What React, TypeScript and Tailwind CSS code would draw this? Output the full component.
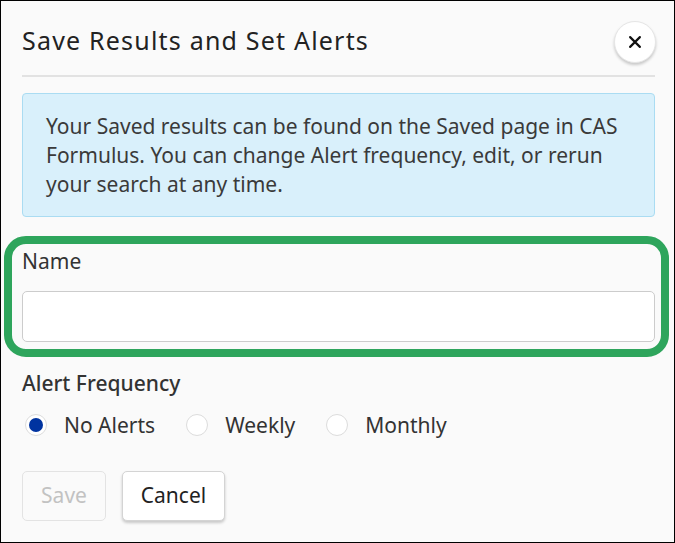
import { useState } from "react";

const options = ["No Alerts", "Weekly", "Monthly"];

export default function App() {
  const [frequency, setFrequency] = useState("No Alerts");
  const [name, setName] = useState("");

  return (
    <div
      className="h-[543px] w-[675px] border border-black bg-[#fafafa] text-[#333]"
      style={{ fontFamily: '"Noto Sans", "Open Sans", sans-serif' }}
    >
      <div className="pl-[21px] pr-[19px]">
        <div className="mt-[20px] flex h-[42px] items-center justify-between">
          <h2 className="mb-[4px] text-[25px] leading-[32px] font-normal tracking-[1.2px] text-[#222]">Save Results and Set Alerts</h2>
          <button
            type="button"
            aria-label="Close"
            className="-mr-[1px] flex h-[42px] w-[42px] items-center justify-center rounded-full border border-[#e6e6e6] bg-white shadow-[0_2px_3px_rgba(0,0,0,0.2)]"
          >
            <svg viewBox="0 0 24 24" className="h-[26px] w-[26px]" fill="none" stroke="#111" strokeWidth="2" strokeLinecap="round">
              <path d="M7.5 7.5l9 9M16.5 7.5l-9 9" />
            </svg>
          </button>
        </div>
        <div className="mt-[12px] h-[2px] bg-[#e2e2e2]" />
        <div className="mt-[16px] rounded-[4px] border border-[#aadcf2] bg-[#d9f0fb] px-[23px] pt-[18px] pb-[17px] text-[21px] leading-[29px] text-[#3a3a3a]">
          Your Saved results can be found on the Saved page in CAS Formulus. You can change Alert frequency, edit, or rerun your search at any time.
        </div>
      </div>

      <div className="mt-[19px] ml-[3px] mr-[5px] rounded-[22px] border-[8px] border-[#2ea55c] pt-[2px] pr-[6px] pb-[7px] pl-[10px]">
        <label className="block text-[21px] leading-[30px] text-[#333]">
          Name
          <input
            value={name}
            onChange={(event) => setName(event.target.value)}
            className="mt-[15px] block h-[51px] w-full rounded-[5px] border border-[#cccccc] bg-white px-3 text-[21px] outline-none"
          />
        </label>
      </div>

      <div className="pl-[21px] pr-[19px]">
        <p className="mt-[11px] text-[21px] leading-[30px] font-medium text-[#333]">Alert Frequency</p>
        <div className="mt-[12px] flex items-center">
          {options.map((option) => (
            <label key={option} className="mr-[28px] flex cursor-pointer items-center text-[21px] leading-[30px] text-[#333]">
              <input
                type="radio"
                name="frequency"
                checked={frequency === option}
                onChange={() => setFrequency(option)}
                className="sr-only"
              />
              <span className="mr-[17px] ml-[3px] flex h-[22px] w-[22px] items-center justify-center rounded-full border border-[#dcdcdc] bg-white">
                {frequency === option && <span className="h-[14px] w-[14px] rounded-full bg-[#0033a0]" />}
              </span>
              {option}
            </label>
          ))}
        </div>
        <div className="mt-[31px] flex gap-[16px]">
          <button
            type="button"
            disabled
            className="h-[50px] w-[84px] rounded-[5px] border border-[#e3e3e3] text-[21px] text-[#c2c2c2]"
          >
            Save
          </button>
          <button
            type="button"
            className="h-[50px] w-[103px] rounded-[5px] border border-[#d4d4d4] bg-white text-[21px] text-[#222] shadow-[0_2px_3px_rgba(0,0,0,0.2)]"
          >
            Cancel
          </button>
        </div>
      </div>
    </div>
  );
}
